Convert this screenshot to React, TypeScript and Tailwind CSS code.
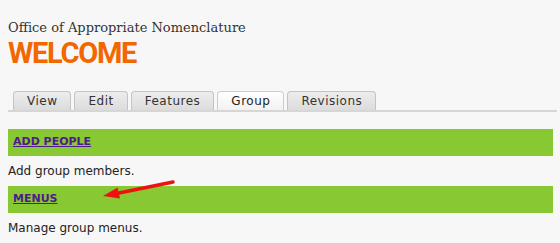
const tabs = [
  { label: 'View', active: false },
  { label: 'Edit', active: false },
  { label: 'Features', active: false },
  { label: 'Group', active: true },
  { label: 'Revisions', active: false },
];

const sections = [
  { title: 'ADD PEOPLE', text: 'Add group members.' },
  { title: 'MENUS', text: 'Manage group menus.' },
];

function Tabs() {
  return (
    <div className="mr-[3px] flex h-[21px] gap-[3px] border-b-2 border-[#d6d6d6] pl-[5px]">
      {tabs.map((t) => (
        <a
          key={t.label}
          href="#"
          className={
            t.active
              ? 'flex h-[19px] items-center rounded-t-[4px] border border-b-0 border-[#cdcdcd] bg-gradient-to-b from-white to-[#f2f2f2] px-[13px] text-[12px] tracking-[0.5px] text-[#222]'
              : 'flex h-[19px] items-center rounded-t-[4px] border border-b-0 border-[#c4c4c4] bg-gradient-to-b from-[#ededed] to-[#dcdcdc] px-[13px] text-[12px] tracking-[0.5px] text-[#333]'
          }
        >
          {t.label}
        </a>
      ))}
    </div>
  );
}

function Arrow() {
  return (
    <svg className="pointer-events-none absolute left-0 top-0" width="560" height="243">
      <line x1="173" y1="182" x2="114" y2="194" stroke="#ee1111" strokeWidth="3.5" strokeLinecap="round" />
      <polygon points="103,196 120,198.6 117.6,187.6" fill="#ee1111" />
    </svg>
  );
}

export default function App() {
  return (
    <div
      className="relative min-h-screen bg-[#f7f7f7] pl-2 pt-5 text-[#222]"
      style={{ fontFamily: '"DejaVu Sans", Verdana, sans-serif' }}
    >
      <div className="text-[13px] leading-4 text-[#333]" style={{ fontFamily: '"DejaVu Serif", serif' }}>
        Office of Appropriate Nomenclature
      </div>
      <h1
        className="mt-[2px] text-[29px] font-bold leading-[30px] tracking-[-1.3px] text-[#f26700]"
        style={{ fontFamily: 'Roboto, "Liberation Sans", sans-serif' }}
      >
        WELCOME
      </h1>

      <div className="mt-[23px]">
        <Tabs />
      </div>

      <div className="mt-[17px] mr-[7px]">
        {sections.map((s) => (
          <div key={s.title}>
            <div className="flex h-[27px] items-center bg-[#88c832] pl-[5px]">
              <a href="#" className="text-[11px] font-bold text-[#4f1a8c] underline">
                {s.title}
              </a>
            </div>
            <p className="my-[6px] text-[12px] leading-[18px]">{s.text}</p>
          </div>
        ))}
      </div>

      <Arrow />
    </div>
  );
}
